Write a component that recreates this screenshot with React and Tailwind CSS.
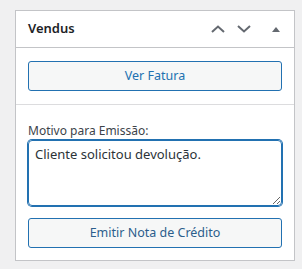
export default function App() {
  return (
    <div
      className="min-h-screen bg-[#f0f0f1] pt-[10px] pl-[15px]"
      style={{ fontFamily: '"Noto Sans", "Open Sans", sans-serif' }}
    >
      <div className="w-[280px] border border-[#c3c4c7] bg-white">
        {/* header */}
        <div className="flex h-[37px] items-center border-b border-[#c3c4c7] pl-[12px] pr-[14px]">
          <h2 className="text-[13px] font-semibold text-[#1d2327]">Vendus</h2>
          <div className="ml-auto flex items-center">
            <svg width="14" height="8" viewBox="0 0 14 8" className="mr-[12px]">
              <path d="M1 7 L7 1.5 L13 7" fill="none" stroke="#646970" strokeWidth="2" />
            </svg>
            <svg width="14" height="8" viewBox="0 0 14 8" className="mr-[21px]">
              <path d="M1 1 L7 6.5 L13 1" fill="none" stroke="#646970" strokeWidth="2" />
            </svg>
            <svg width="8" height="5" viewBox="0 0 8 5">
              <path d="M0 5 L4 0 L8 5 Z" fill="#646970" />
            </svg>
          </div>
        </div>

        {/* ver fatura */}
        <div className="border-b border-[#dcdcde] px-[12px] py-[13px]">
          <button className="h-[30px] w-full rounded-[3px] border border-[#2271b1] bg-[#f6f7f7] text-[12.5px] text-[#2271b1]">
            Ver Fatura
          </button>
        </div>

        {/* nota de credito */}
        <div className="px-[12px] pt-[16px] pb-[12px]">
          <label className="block text-[12px] leading-[19px] text-[#3c434a]">
            Motivo para Emissão:
          </label>
          <textarea
            defaultValue="Cliente solicitou devolução."
            className="block h-[66px] w-full rounded-[4px] border border-[#2271b1] px-[6px] py-[3px] text-[13px] leading-[20px] text-[#2c3338] shadow-[0_0_0_1px_#2271b1] outline-none"
          />
          <button className="mt-[12px] h-[30px] w-full rounded-[3px] border border-[#2271b1] bg-[#f6f7f7] text-[12.5px] text-[#2c5e8c]">
            Emitir Nota de Crédito
          </button>
        </div>
      </div>
    </div>
  );
}
